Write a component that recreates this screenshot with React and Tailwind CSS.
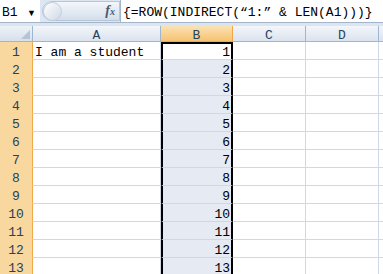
const rows = Array.from({ length: 13 }, (_, i) => i + 1);
const mono = "font-['Liberation_Mono','DejaVu_Sans_Mono',monospace]";

function FormulaBar() {
  return (
    <div className="flex h-[23px] items-stretch border-b border-[#a5b6cb] bg-[#dde7f3]">
      <div className="flex w-[40px] items-center justify-between bg-white pl-[2px] pr-[4px] pt-[2px]">
        <span className={`${mono} text-[13px] leading-none text-black`}>B1</span>
        <span className="text-[9px] leading-none text-black">▼</span>
      </div>
      <div className="my-[1px] ml-[2px] flex w-[78px] items-center justify-between rounded-l-full border border-[#b6c5d8] bg-gradient-to-b from-[#f4f7fb] to-[#d4deea] pr-[4px]">
        <div className="h-[19px] w-[19px] rounded-full border border-[#c4cfdc] bg-gradient-to-br from-white to-[#cfd9e6]" />
        <span className="font-['Liberation_Serif',serif] text-[14px] font-bold italic leading-none text-[#4a5a6e]">
          f<span className="text-[10px]">x</span>
        </span>
      </div>
      <div className="flex flex-1 items-center border-l border-[#a5b6cb] bg-white pl-[2px] pt-[2px]">
        <span className={`${mono} whitespace-pre text-[13px] leading-none text-black`}>
          {"{=ROW(INDIRECT(“1:” & LEN(A1)))}"}
        </span>
      </div>
    </div>
  );
}

function ColHeader({ label, active, last }) {
  return (
    <div
      className={`flex h-[16px] items-center justify-center border-b pt-[3px] ${last ? "" : "border-r"} ${mono} text-[13px] leading-none text-[#27415f] ${
        active
          ? "border-[#f1a84a] bg-gradient-to-b from-[#fbe2b3] to-[#f6c36f]"
          : "border-[#9eb6ce] bg-gradient-to-b from-[#f3f6fa] to-[#dbe3ee]"
      }`}
    >
      {label}
    </div>
  );
}

export default function App() {
  return (
    <div className="h-[274px] w-[383px] overflow-hidden bg-white">
      <FormulaBar />
      <div className="h-[3px] bg-[#dbe5f1]" />
      <div className="grid grid-cols-[33px_128px_72px_73px_73px_4px]">
        <div className="relative h-[16px] border-b border-r border-[#9eb6ce] bg-gradient-to-b from-[#eef2f7] to-[#d7e0eb]">
          <div className="absolute bottom-[2px] right-[2px] h-0 w-0 border-b-[9px] border-l-[9px] border-b-[#b4c3d6] border-l-transparent" />
        </div>
        <ColHeader label="A" />
        <ColHeader label="B" active />
        <ColHeader label="C" />
        <ColHeader label="D" />
        <ColHeader label="" last />
        {rows.map((r) => (
          <div key={r} className="contents">
            <div className={`flex h-[18px] items-center justify-center border-b border-r border-b-[#f3d7a8] border-r-[#f1a84a] bg-[#f9d8a0] pt-[3px] ${mono} text-[13px] leading-none text-[#27415f]`}>
              {r}
            </div>
            <div className={`flex h-[18px] items-center border-b border-r border-[#d0d7e5] pl-[2px] pt-[3px] ${mono} text-[13px] leading-none text-black`}>
              {r === 1 ? "I am a student" : ""}
            </div>
            <div
              className={`flex h-[18px] items-center justify-end border-x-[2px] border-b border-x-black border-b-[#d0d7e5] pr-[1px] ${r === 1 ? "border-t-[2px] border-t-black bg-white pt-[1px]" : "bg-[#e6eaf3] pt-[3px]"} ${mono} text-[13px] leading-none text-black`}
            >
              {r}
            </div>
            <div className="h-[18px] border-b border-r border-[#d0d7e5]" />
            <div className="h-[18px] border-b border-r border-[#d0d7e5]" />
            <div className="h-[18px] border-b border-[#d0d7e5]" />
          </div>
        ))}
      </div>
    </div>
  );
}
